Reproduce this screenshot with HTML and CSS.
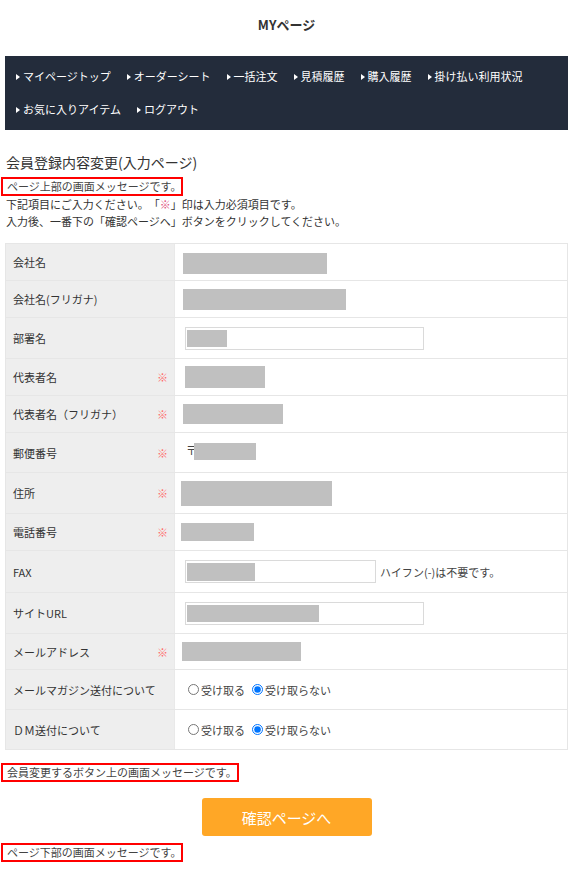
FILE: index.html
```html
<!DOCTYPE html>
<html lang="ja">
<head>
<meta charset="utf-8">
<title>MYページ</title>
<link rel="stylesheet" href="styles.css">
</head>
<body>
<h1 class="page-title">MYページ</h1>
<nav class="mynav">
  <ul class="mynav-list">
    <li><a class="mynav-link" href="#">マイページトップ</a></li>
    <li><a class="mynav-link" href="#">オーダーシート</a></li>
    <li><a class="mynav-link" href="#">一括注文</a></li>
    <li><a class="mynav-link" href="#">見積履歴</a></li>
    <li><a class="mynav-link" href="#">購入履歴</a></li>
    <li><a class="mynav-link" href="#">掛け払い利用状況</a></li>
    <li><a class="mynav-link" href="#">お気に入りアイテム</a></li>
    <li><a class="mynav-link" href="#">ログアウト</a></li>
  </ul>
</nav>
<main class="content">
  <h2 class="section-title">会員登録内容変更(入力ページ)</h2>
  <div class="msg msg-top"><span class="msg-box">ページ上部の画面メッセージです。</span></div>
  <p class="lead">下記項目にご入力ください。「<span class="lead-mark">※</span>」印は入力必須項目です。<br>入力後、一番下の「確認ページへ」ボタンをクリックしてください。</p>

  <div class="form-grid">
    <div class="form-row h36">
      <div class="form-label"><span>会社名</span></div>
      <div class="form-value"><span class="redact r-company"></span></div>
    </div>
    <div class="form-row h36">
      <div class="form-label"><span>会社名(フリガナ)</span></div>
      <div class="form-value"><span class="redact r-company-kana"></span></div>
    </div>
    <div class="form-row h40">
      <div class="form-label"><span>部署名</span></div>
      <div class="form-value"><div class="input-box input-wide"><span class="redact r-dept"></span></div></div>
    </div>
    <div class="form-row h36">
      <div class="form-label"><span>代表者名</span><span class="req">※</span></div>
      <div class="form-value"><span class="redact r-rep"></span></div>
    </div>
    <div class="form-row h36">
      <div class="form-label"><span>代表者名（フリガナ）</span><span class="req">※</span></div>
      <div class="form-value"><span class="redact r-rep-kana"></span></div>
    </div>
    <div class="form-row h39">
      <div class="form-label"><span>郵便番号</span><span class="req">※</span></div>
      <div class="form-value"><span class="zip-mark">〒</span><span class="redact r-zip"></span></div>
    </div>
    <div class="form-row h40">
      <div class="form-label"><span>住所</span><span class="req">※</span></div>
      <div class="form-value"><span class="redact r-address"></span></div>
    </div>
    <div class="form-row h36">
      <div class="form-label"><span>電話番号</span><span class="req">※</span></div>
      <div class="form-value"><span class="redact r-tel"></span></div>
    </div>
    <div class="form-row h41">
      <div class="form-label"><span>FAX</span></div>
      <div class="form-value"><div class="input-box input-fax"><span class="redact r-fax"></span></div><span class="note">ハイフン(-)は不要です。</span></div>
    </div>
    <div class="form-row h40">
      <div class="form-label"><span>サイトURL</span></div>
      <div class="form-value"><div class="input-box input-wide"><span class="redact r-url"></span></div></div>
    </div>
    <div class="form-row h35">
      <div class="form-label"><span>メールアドレス</span><span class="req">※</span></div>
      <div class="form-value"><span class="redact r-mail"></span></div>
    </div>
    <div class="form-row h39">
      <div class="form-label"><span>メールマガジン送付について</span></div>
      <div class="form-value">
        <div class="radio-group">
          <label class="radio"><input type="radio" name="mag">受け取る</label>
          <label class="radio"><input type="radio" name="mag" checked>受け取らない</label>
        </div>
      </div>
    </div>
    <div class="form-row h39">
      <div class="form-label"><span>ＤＭ送付について</span></div>
      <div class="form-value">
        <div class="radio-group">
          <label class="radio"><input type="radio" name="dm">受け取る</label>
          <label class="radio"><input type="radio" name="dm" checked>受け取らない</label>
        </div>
      </div>
    </div>
  </div>

  <div class="msg msg-mid"><span class="msg-box">会員変更するボタン上の画面メッセージです。</span></div>
  <button class="confirm-btn" type="button">確認ページへ</button>
  <div class="msg msg-bottom"><span class="msg-box">ページ下部の画面メッセージです。</span></div>
</main>
</body>
</html>
```
FILE: styles.css
```css
* { box-sizing: border-box; }

body {
  margin: 0;
  font-family: "Noto Sans CJK JP", "Noto Sans", sans-serif;
  font-size: 11px;
  color: #333;
  background: #fff;
  text-spacing-trim: space-all;
}

.page-title {
  margin: 0;
  padding-top: 16px;
  line-height: 18px;
  font-size: 13px;
  font-weight: bold;
  text-align: center;
  color: #333;
}

.mynav {
  margin: 22px 5px 0;
  background: #232c3b;
  padding: 4px 11px;
}

.mynav-list {
  display: flex;
  flex-wrap: wrap;
  column-gap: 16px;
  list-style: none;
  margin: 0;
  padding: 0;
  line-height: 33px;
}

.mynav-link {
  display: flex;
  align-items: center;
  color: #fff;
  text-decoration: none;
  font-size: 11px;
}

.mynav-link::before {
  content: "";
  width: 0;
  height: 0;
  border-left: 4px solid #fff;
  border-top: 3.5px solid transparent;
  border-bottom: 3.5px solid transparent;
  margin-right: 3px;
}

.content {
  padding: 0 5px;
}

.section-title {
  margin: 22px 0 0;
  padding-left: 1px;
  line-height: 20px;
  font-size: 14px;
  font-weight: normal;
  color: #333;
}

.msg {
  display: flex;
}

.msg-box {
  display: inline-block;
  margin-left: -4px;
  padding: 0 0 0 4px;
  border: 2px solid #f00;
  line-height: 15px;
  font-size: 11px;
  color: #444;
}

.msg-top { margin-top: 5px; }
.msg-mid { margin-top: 13px; }
.msg-bottom { margin-top: 7px; }

.lead {
  margin: 0;
  padding-left: 1px;
  line-height: 17px;
  font-size: 11px;
}

.lead-mark { color: #e0507e; }

.form-grid {
  margin-top: 13px;
  border: 1px solid #e6e6e6;
}

.form-row {
  display: grid;
  grid-template-columns: 169px 1fr;
  border-top: 1px solid #e6e6e6;
}

.form-row:first-child { border-top: none; }

.h35 { height: 36px; }
.h36 { height: 37px; }
.h39 { height: 40px; }
.h40 { height: 41px; }
.h41 { height: 42px; }
.form-row:first-child.h36 { height: 36px; }

.form-label {
  display: flex;
  align-items: center;
  justify-content: space-between;
  background: #eee;
  border-right: 1px solid #e9e9e9;
  padding: 0 6px 0 7px;
  font-size: 11px;
  color: #333;
}

.req {
  color: #ff6a6a;
  font-size: 11px;
}

.form-value {
  display: flex;
  align-items: center;
  padding-left: 8px;
}

.redact {
  display: inline-block;
  background: #c0c0c0;
}

.r-company { width: 144px; height: 21px; margin-top: 2px; }
.r-company-kana { width: 163px; height: 21px; }
.r-dept { width: 40px; height: 17px; }
.r-rep { width: 80px; height: 22px; margin-left: 2px; }
.r-rep-kana { width: 100px; height: 20px; }
.r-zip { width: 62px; height: 17px; margin-left: -3px; margin-top: -2px; }
.r-address { width: 151px; height: 25px; margin-left: -2px; }
.r-tel { width: 73px; height: 18px; margin-left: -2px; }
.r-fax { width: 68px; height: 18px; }
.r-url { width: 132px; height: 17px; }
.r-mail { width: 119px; height: 19px; margin-left: -1px; }

.zip-mark {
  margin-left: 3px;
  font-size: 11px;
  color: #444;
  line-height: 11px;
  margin-top: -4px;
}

.input-box {
  display: flex;
  align-items: center;
  height: 23px;
  margin-left: 2px;
  padding-left: 1px;
  border: 1px solid #dadada;
  background: #fff;
}

.input-wide { width: 239px; }
.input-fax { width: 191px; }

.note {
  margin-left: 4px;
  font-size: 11px;
  color: #444;
}

.radio-group {
  display: flex;
  align-items: center;
  gap: 7px;
  margin-left: 5px;
}

.radio {
  display: flex;
  align-items: center;
  font-size: 11px;
  color: #444;
}

.radio input {
  width: 11px;
  height: 11px;
  margin: 0 2px 0 0;
}

.confirm-btn {
  display: block;
  margin: 16px auto 0;
  width: 170px;
  height: 38px;
  border: none;
  border-radius: 3px;
  background: #ffa726;
  color: #fff;
  font-family: "Noto Sans CJK JP", "Noto Sans", sans-serif;
  font-size: 15px;
  cursor: pointer;
}
```
